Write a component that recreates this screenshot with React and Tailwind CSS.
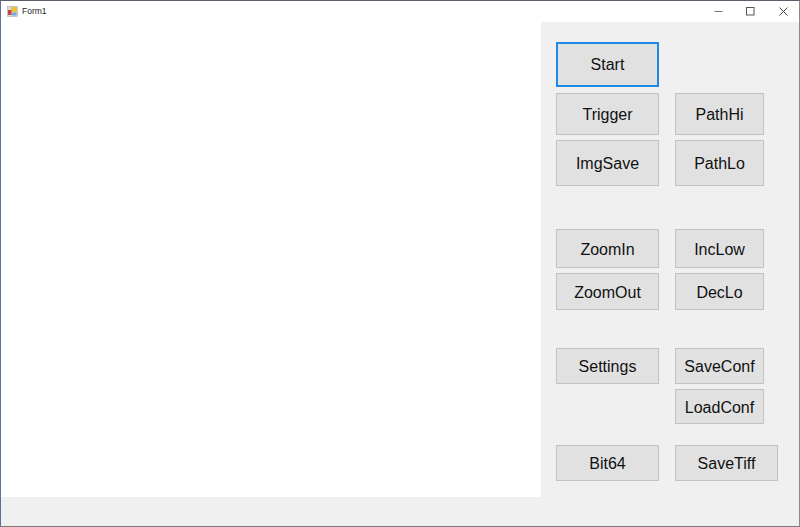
const Btn = ({ label, className = "", focused = false }) => (
    <button type="button" className={`flex items-center justify-center bg-[#e1e1e1] text-[16px] text-[#111] ${focused ? "border-2 border-[#1f8ae6]" : "border border-[#c2c2c2] pt-[2px]"} ${className}`}>
        {label}
    </button>
);

const App = () => {
    return (
        <div className="w-[800px] h-[527px] flex flex-col overflow-hidden bg-white border-t border-t-[#5a5f6b] border-b border-b-[#7a7a7a] border-l border-l-[#5d7396] border-r border-r-[#8a8a8a] font-['Liberation_Sans',sans-serif]">
            {/* title bar */}
            <div className="h-[21px] shrink-0 flex items-center bg-white">
                <svg width="11" height="11" viewBox="0 0 11 11" className="ml-[6px]">
                    <rect x="0.5" y="0.5" width="10" height="10" fill="#d5dbe6" stroke="#9aa3b2" strokeWidth="0.5" />
                    <rect x="4" y="1" width="6" height="5" fill="#f0c238" />
                    <rect x="1" y="4" width="3.5" height="5" fill="#c4453a" />
                    <rect x="5" y="6.5" width="4.5" height="3" fill="#7ba6d8" />
                </svg>
                <span className="ml-[4px] text-[8.5px] text-[#222]">Form1</span>
                <div className="ml-auto flex items-center">
                    <div className="w-[32px] flex justify-center">
                        <svg width="9" height="9" viewBox="0 0 9 9"><path d="M0.5 4.5H8.5" stroke="#777" strokeWidth="1" /></svg>
                    </div>
                    <div className="w-[33px] flex justify-center">
                        <svg width="9" height="9" viewBox="0 0 9 9"><rect x="0.5" y="0.5" width="7.5" height="7.5" fill="none" stroke="#555" strokeWidth="1" /></svg>
                    </div>
                    <div className="w-[32px] flex justify-center">
                        <svg width="9" height="9" viewBox="0 0 9 9"><path d="M0.5 0.5L8.5 8.5M8.5 0.5L0.5 8.5" stroke="#444" strokeWidth="1" /></svg>
                    </div>
                </div>
            </div>

            {/* client area */}
            <div className="flex-1 flex flex-col bg-[#f0f0f0]">
                <div className="flex-1 flex">
                    <div className="w-[540px] bg-white"></div>
                    <div className="flex-1 pt-[20px] pl-[15px]">
                        <div className="flex gap-[16px] h-[45px]">
                            <Btn label="Start" focused className="w-[103px]" />
                        </div>
                        <div className="flex gap-[16px] h-[42px] mt-[6px]">
                            <Btn label="Trigger" className="w-[103px]" />
                            <Btn label="PathHi" className="w-[89px]" />
                        </div>
                        <div className="flex gap-[16px] h-[46px] mt-[5px]">
                            <Btn label="ImgSave" className="w-[103px]" />
                            <Btn label="PathLo" className="w-[89px]" />
                        </div>
                        <div className="flex gap-[16px] h-[39px] mt-[43px]">
                            <Btn label="ZoomIn" className="w-[103px]" />
                            <Btn label="IncLow" className="w-[89px]" />
                        </div>
                        <div className="flex gap-[16px] h-[37px] mt-[5px]">
                            <Btn label="ZoomOut" className="w-[103px]" />
                            <Btn label="DecLo" className="w-[89px]" />
                        </div>
                        <div className="flex gap-[16px] h-[36px] mt-[38px]">
                            <Btn label="Settings" className="w-[103px]" />
                            <Btn label="SaveConf" className="w-[89px]" />
                        </div>
                        <div className="flex gap-[16px] h-[35px] mt-[5px] pl-[119px]">
                            <Btn label="LoadConf" className="w-[89px]" />
                        </div>
                        <div className="flex gap-[16px] h-[36px] mt-[21px]">
                            <Btn label="Bit64" className="w-[103px]" />
                            <Btn label="SaveTiff" className="w-[103px]" />
                        </div>
                    </div>
                </div>
                <div className="h-[29px] shrink-0"></div>
            </div>
        </div>
    );
};

export default App;
